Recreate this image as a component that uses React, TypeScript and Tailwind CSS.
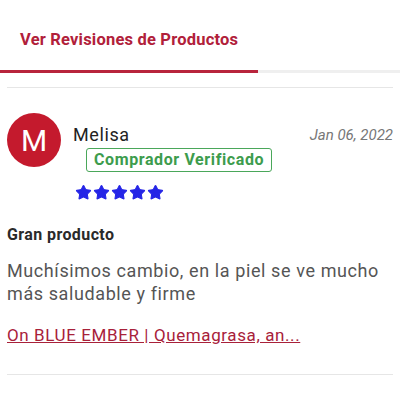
import { Star } from 'lucide-react';

const font = { fontFamily: 'Roboto, "Liberation Sans", sans-serif' };

function Stars({ count }: { count: number }) {
  return (
    <div className="flex gap-[1px]">
      {Array.from({ length: count }).map((_, i) => (
        <Star key={i} size={17} className="text-[#2525e6]" fill="#2525e6" strokeWidth={1.5} />
      ))}
    </div>
  );
}

export default function App() {
  return (
    <div className="w-[400px] h-[400px] bg-white overflow-hidden" style={font}>
      {/* Tabs header */}
      <div className="pt-[28px]">
        <div className="px-[20px] h-[42px] text-[16.5px] font-bold text-[#b1203a] tracking-[0.2px]">
          Ver Revisiones de Productos
        </div>
        <div className="flex h-[3px]">
          <div className="w-[258px] bg-[#b8243c]" />
          <div className="flex-1 bg-[#efefef]" />
        </div>
      </div>

      <div className="mx-[7px] mt-[14px] border-t border-[#e6e6e6]" />

      {/* Review */}
      <div className="px-[7px] pt-[25px]">
        <div className="flex">
          <div className="w-[54px] h-[54px] rounded-full bg-[#c41a2d] flex items-center justify-center text-white text-[30px] shrink-0">
            M
          </div>
          <div className="flex-1 ml-[12px] mt-[10px]">
            <div className="flex justify-between items-start">
              <span className="text-[18px] text-[#222] leading-[24px] tracking-[0.6px]">Melisa</span>
              <span className="text-[15px] italic text-[#777] leading-[24px]">Jan 06, 2022</span>
            </div>
            <div className="mt-[1px] ml-[13px] inline-block border border-[#4aa75a] rounded-[3px] px-[7px] text-[16px] font-bold text-[#3d9c4d] leading-[22px] tracking-[0.6px]">
              Comprador Verificado
            </div>
            <div className="mt-[12px] ml-[2px]">
              <Stars count={5} />
            </div>
          </div>
        </div>

        <div className="mt-[24px] text-[16px] leading-[19px] font-bold text-[#2a2a2a] tracking-[0.4px]">Gran producto</div>
        <p className="mt-[15px] text-[18px] leading-[23px] text-[#555] tracking-[0.6px]">
          Muchísimos cambio, en la piel se ve mucho más saludable y firme
        </p>
        <a className="block mt-[20px] text-[17px] leading-[20px] text-[#a8213a] underline tracking-[0.6px]">
          On BLUE EMBER | Quemagrasa, an...
        </a>
      </div>

      <div className="mx-[7px] mt-[29px] border-t border-[#e6e6e6]" />
    </div>
  );
}
